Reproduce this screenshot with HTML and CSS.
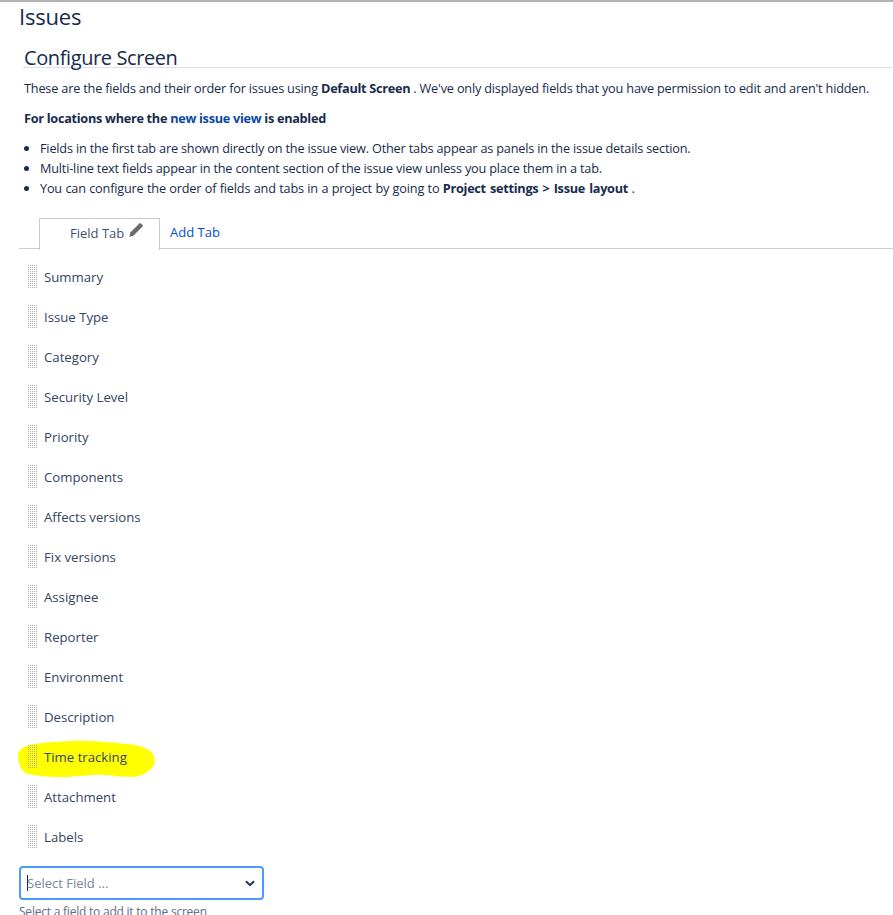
FILE: index.html
```html
<!DOCTYPE html>
<html lang="en">
<head>
<meta charset="utf-8">
<title>Configure Screen</title>
<link rel="stylesheet" href="styles.css">
</head>
<body>
<main class="page">
<h1 class="title">Issues</h1>
<section class="content">
<h2 class="heading">Configure Screen</h2>
<p class="intro">These are the fields and their order for issues using <b>Default Screen</b> . We've only displayed fields that you have permission to edit and aren't hidden.</p>
<p class="locations"><b>For locations where the <a href="#">new issue view</a> is enabled</b></p>
<ul class="notes">
<li>Fields in the first tab are shown directly on the issue view. Other tabs appear as panels in the issue details section.</li>
<li>Multi-line text fields appear in the content section of the issue view unless you place them in a tab.</li>
<li class="note-wide">You can configure the order of fields and tabs in a project by going to <b>Project settings &gt; Issue layout</b> .</li>
</ul>
</section>
<nav class="tabs">
<div class="tab">Field Tab <svg class="pencil" viewBox="0 0 14 14" width="14" height="14"><path d="M10.4.5a1.2 1.2 0 0 1 1.7 0l1.4 1.4a1.2 1.2 0 0 1 0 1.7L4.4 12.7.3 13.7l1-4.1z" fill="#6b6b6b"/></svg></div>
<a class="add-tab" href="#">Add Tab</a>
</nav>
<div class="fields">
<div class="field"><span class="grip"></span>Summary</div>
<div class="field"><span class="grip"></span>Issue Type</div>
<div class="field"><span class="grip"></span>Category</div>
<div class="field"><span class="grip"></span>Security Level</div>
<div class="field"><span class="grip"></span>Priority</div>
<div class="field"><span class="grip"></span>Components</div>
<div class="field"><span class="grip"></span>Affects versions</div>
<div class="field"><span class="grip"></span>Fix versions</div>
<div class="field"><span class="grip"></span>Assignee</div>
<div class="field"><span class="grip"></span>Reporter</div>
<div class="field"><span class="grip"></span>Environment</div>
<div class="field"><span class="grip"></span>Description</div>
<div class="field"><svg class="marker" viewBox="0 0 140 40" width="140" height="40"><path d="M1 15C1 10 5 7 13 5 25 2 40 2 53 1 70 0 85 2 100 3 115 4 125 6 130 9 136 12 138 17 138 22 137 28 130 33 122 36 112 38 100 36 88 35 75 34 55 38 36 37 22 36 12 35 7 32 3 28 1 22 1 15Z" fill="#ffff00"/></svg><span class="grip"></span>Time tracking</div>
<div class="field"><span class="grip"></span>Attachment</div>
<div class="field"><span class="grip"></span>Labels</div>
</div>
<div class="select"><span class="caret"></span><span class="placeholder">Select Field ...</span>
<svg class="chevron" viewBox="0 0 10 7" width="10" height="7"><path d="M1 1.2 5 5.2 9 1.2" fill="none" stroke="#253858" stroke-width="2"/></svg></div>
<p class="hint">Select a field to add it to the screen</p>
</main>
</body>
</html>
```
FILE: styles.css
```css
html, body { margin: 0; padding: 0; height: 915px; overflow: hidden; background: #fff; }
body { font-family: "Open Sans", "Noto Sans", sans-serif; font-size: 13px; color: #172b4d; border-top: 2px solid #b3b3b3; box-sizing: border-box; }
.page { padding: 0 0 0 19px; }
.title { margin: 0; font-size: 22px; font-weight: 500; line-height: 29px; height: 29px; color: #172b4d; letter-spacing: -0.2px; }
.content { padding-left: 5px; font-size: 12.7px; letter-spacing: -0.18px; }
.content b { letter-spacing: -0.28px; }
.heading { margin: 14px 0 0 -1px; padding: 0 0 0 1px; font-size: 20px; font-weight: 400; letter-spacing: -0.4px; line-height: 26px; height: 22px; border-bottom: 1px solid #dfe1e6; }
.intro { margin: 10px 0 0; line-height: 20px; white-space: nowrap; }
.locations { margin: 10px 0 0; line-height: 20px; }
.notes { margin: 10px 0 0; padding: 0 0 0 16px; line-height: 20px; }
.note-wide { word-spacing: 0.33px; }
.note-wide b { word-spacing: 1.2px; }
.locations a { color: #0747a6; text-decoration: none; }
.tabs { display: flex; margin-top: 19px; height: 31px; border-bottom: 1px solid #ccc; padding-left: 20px; }
.tab { box-sizing: border-box; width: 121px; height: 32px; border: 1px solid #ccc; border-bottom: 0; background: #fff; padding: 4px 0 0 30px; margin-top: 1px; line-height: 20px; color: #42526e; white-space: nowrap; }
.pencil { vertical-align: 1px; margin-left: 1px; }
.add-tab { color: #0052cc; text-decoration: none; margin-left: 10px; line-height: 20px; padding-top: 5px; }
.fields { isolation: isolate; display: flex; flex-direction: column; margin-top: 8px; }
.field { position: relative; display: flex; align-items: center; height: 40px; padding-left: 9px; line-height: 20px; color: #344563; font-size: 13.2px; }
.grip { width: 9px; height: 24px; margin-right: 7px; background-image: conic-gradient(#b0b0b0 25%, transparent 0); background-size: 2px 2px; background-position: -1px 0; }
.marker { position: absolute; left: -2px; top: 3px; z-index: -1; }
.select { box-sizing: border-box; display: flex; align-items: center; width: 245px; height: 34px; margin-top: 9px; border: 2px solid #4c9aff; border-radius: 4px; padding-left: 6px; }
.caret { width: 1px; height: 16px; background: #172b4d; margin-right: -1px; }
.placeholder { color: #7a869a; flex: 1; }
.chevron { margin-right: 7px; }
.hint { margin: 4px 0 0; font-size: 12px; letter-spacing: -0.22px; line-height: 16px; color: #5e6c84; }
```
